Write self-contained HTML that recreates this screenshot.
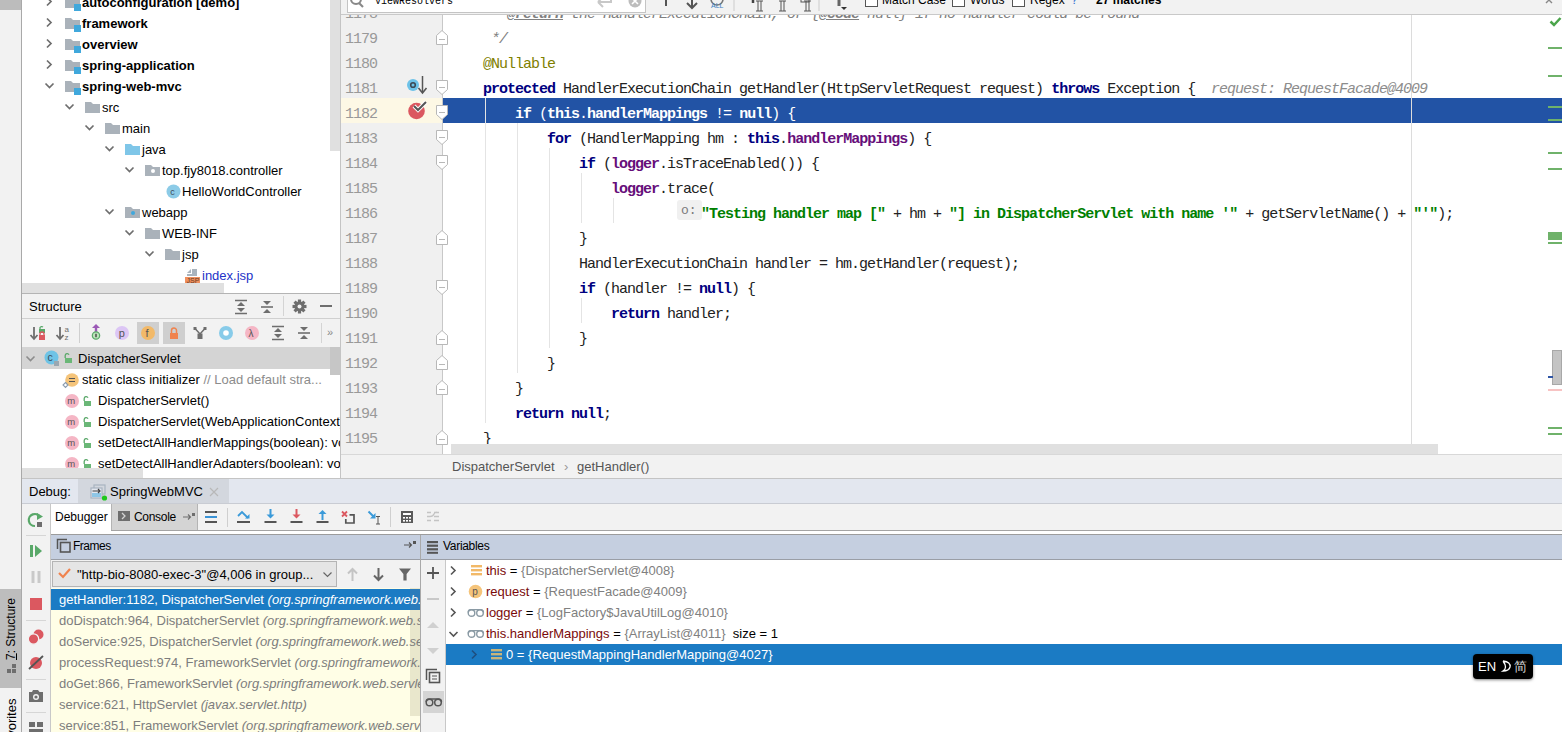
<!DOCTYPE html><html><head><meta charset="utf-8"><style>
*{box-sizing:border-box;margin:0;padding:0}
html,body{width:1562px;height:732px;overflow:hidden;background:#f2f2f2;font-family:"Liberation Sans",sans-serif;font-size:13px;color:#000}
.a{position:absolute}
.t{position:absolute;white-space:pre;line-height:21px}
.mono{font-family:"Liberation Mono",monospace}
.code{position:absolute;white-space:pre;font-family:"Liberation Mono",monospace;font-size:15px;letter-spacing:-1px;line-height:25px;color:#222}
.kw{color:#000080;font-weight:bold}
.fld{color:#660e7a;font-weight:bold}
.str{color:#008000;font-weight:bold}
.ln{position:absolute;white-space:pre;font-family:"Liberation Mono",monospace;font-size:15px;letter-spacing:-1px;line-height:25px;color:#999}
</style></head><body>
<div class="a" style="left:0;top:0;width:21px;height:732px;background:#f2f2f2"></div>
<div class="a" style="left:0;top:0;width:21px;height:10px;background:#bcbcbc"></div>
<div class="a" style="left:21px;top:0;width:1px;height:732px;background:#a9a9a9"></div>
<div class="a" style="left:0;top:589px;width:21px;height:99px;background:#bdbdbd"></div>
<div class="t" style="left:3px;top:660px;width:70px;transform-origin:0 0;transform:rotate(-90deg);font-size:12px;color:#000;line-height:17px"><span style="text-decoration:underline">7</span>: Structure</div>
<svg class="a" style="left:6px;top:663px" width="12" height="12"><rect x="1" y="6" width="4" height="4" fill="#6e6e6e"/><rect x="6" y="6" width="4" height="4" fill="#6e6e6e"/><rect x="6" y="1" width="4" height="4" fill="#6e6e6e"/></svg>
<div class="t" style="left:3px;top:752px;width:70px;transform-origin:0 0;transform:rotate(-90deg);font-size:13px;color:#000;line-height:17px">Favorites</div>
<div class="a" style="left:22px;top:0;width:318px;height:293px;background:#fff"></div>
<svg class="a" style="left:45px;top:-4px" width="12" height="12"><polyline points="2,1.5 6,5.5 2,9.5" fill="none" stroke="#6e6e6e" stroke-width="1.7"/></svg>
<svg class="a" style="left:65px;top:-4px" width="18" height="16"><path d="M0 1 H6 L8 3 H15 V12 H0 Z" fill="#aab2ba"/><rect x="9" y="8" width="7" height="7" fill="#40a8dc" stroke="#fff" stroke-width="0"/></svg>
<div class="t" style="left:82px;top:-8px;font-weight:bold;color:#000">autoconfiguration [demo]</div>
<svg class="a" style="left:45px;top:17px" width="12" height="12"><polyline points="2,1.5 6,5.5 2,9.5" fill="none" stroke="#6e6e6e" stroke-width="1.7"/></svg>
<svg class="a" style="left:65px;top:17px" width="18" height="16"><path d="M0 1 H6 L8 3 H15 V12 H0 Z" fill="#aab2ba"/><rect x="9" y="8" width="7" height="7" fill="#40a8dc" stroke="#fff" stroke-width="0"/></svg>
<div class="t" style="left:82px;top:13px;font-weight:bold;color:#000">framework</div>
<svg class="a" style="left:45px;top:38px" width="12" height="12"><polyline points="2,1.5 6,5.5 2,9.5" fill="none" stroke="#6e6e6e" stroke-width="1.7"/></svg>
<svg class="a" style="left:65px;top:38px" width="18" height="16"><path d="M0 1 H6 L8 3 H15 V12 H0 Z" fill="#aab2ba"/><rect x="9" y="8" width="7" height="7" fill="#40a8dc" stroke="#fff" stroke-width="0"/></svg>
<div class="t" style="left:82px;top:34px;font-weight:bold;color:#000">overview</div>
<svg class="a" style="left:45px;top:59px" width="12" height="12"><polyline points="2,1.5 6,5.5 2,9.5" fill="none" stroke="#6e6e6e" stroke-width="1.7"/></svg>
<svg class="a" style="left:65px;top:59px" width="18" height="16"><path d="M0 1 H6 L8 3 H15 V12 H0 Z" fill="#aab2ba"/><rect x="9" y="8" width="7" height="7" fill="#40a8dc" stroke="#fff" stroke-width="0"/></svg>
<div class="t" style="left:82px;top:55px;font-weight:bold;color:#000">spring-application</div>
<svg class="a" style="left:44px;top:80px" width="12" height="12"><polyline points="1.5,3.5 5.5,7.5 9.5,3.5" fill="none" stroke="#6e6e6e" stroke-width="1.7"/></svg>
<svg class="a" style="left:65px;top:80px" width="18" height="16"><path d="M0 1 H6 L8 3 H15 V12 H0 Z" fill="#aab2ba"/><rect x="9" y="8" width="7" height="7" fill="#40a8dc" stroke="#fff" stroke-width="0"/></svg>
<div class="t" style="left:82px;top:76px;font-weight:bold;color:#000">spring-web-mvc</div>
<svg class="a" style="left:64px;top:101px" width="12" height="12"><polyline points="1.5,3.5 5.5,7.5 9.5,3.5" fill="none" stroke="#6e6e6e" stroke-width="1.7"/></svg>
<svg class="a" style="left:85px;top:101px" width="18" height="16"><path d="M0 1 H6 L8 3 H15 V12 H0 Z" fill="#aab2ba"/></svg>
<div class="t" style="left:102px;top:97px;font-weight:normal;color:#000">src</div>
<svg class="a" style="left:84px;top:122px" width="12" height="12"><polyline points="1.5,3.5 5.5,7.5 9.5,3.5" fill="none" stroke="#6e6e6e" stroke-width="1.7"/></svg>
<svg class="a" style="left:105px;top:122px" width="18" height="16"><path d="M0 1 H6 L8 3 H15 V12 H0 Z" fill="#aab2ba"/></svg>
<div class="t" style="left:122px;top:118px;font-weight:normal;color:#000">main</div>
<svg class="a" style="left:104px;top:143px" width="12" height="12"><polyline points="1.5,3.5 5.5,7.5 9.5,3.5" fill="none" stroke="#6e6e6e" stroke-width="1.7"/></svg>
<svg class="a" style="left:125px;top:143px" width="18" height="16"><path d="M0 1 H6 L8 3 H15 V12 H0 Z" fill="#7fc6e8"/></svg>
<div class="t" style="left:142px;top:139px;font-weight:normal;color:#000">java</div>
<svg class="a" style="left:124px;top:164px" width="12" height="12"><polyline points="1.5,3.5 5.5,7.5 9.5,3.5" fill="none" stroke="#6e6e6e" stroke-width="1.7"/></svg>
<svg class="a" style="left:145px;top:164px" width="18" height="16"><path d="M0 1 H6 L8 3 H15 V12 H0 Z" fill="#aab2ba"/><rect x="6" y="5" width="4" height="4" rx="2" fill="#fff"/></svg>
<div class="t" style="left:162px;top:160px;font-weight:normal;color:#000">top.fjy8018.controller</div>
<svg class="a" style="left:166px;top:184px" width="16" height="16"><circle cx="7.5" cy="7.5" r="7" fill="#8ccbe7"/><text x="4.2" y="11" font-size="9" font-family="Liberation Sans" fill="#3d4a56">c</text></svg>
<div class="t" style="left:182px;top:181px;font-weight:normal;color:#000">HelloWorldController</div>
<svg class="a" style="left:104px;top:206px" width="12" height="12"><polyline points="1.5,3.5 5.5,7.5 9.5,3.5" fill="none" stroke="#6e6e6e" stroke-width="1.7"/></svg>
<svg class="a" style="left:125px;top:206px" width="18" height="16"><path d="M0 1 H6 L8 3 H15 V12 H0 Z" fill="#aab2ba"/><rect x="6" y="5" width="4" height="4" rx="2" fill="#40a8dc"/></svg>
<div class="t" style="left:142px;top:202px;font-weight:normal;color:#000">webapp</div>
<svg class="a" style="left:124px;top:227px" width="12" height="12"><polyline points="1.5,3.5 5.5,7.5 9.5,3.5" fill="none" stroke="#6e6e6e" stroke-width="1.7"/></svg>
<svg class="a" style="left:145px;top:227px" width="18" height="16"><path d="M0 1 H6 L8 3 H15 V12 H0 Z" fill="#aab2ba"/></svg>
<div class="t" style="left:162px;top:223px;font-weight:normal;color:#000">WEB-INF</div>
<svg class="a" style="left:144px;top:248px" width="12" height="12"><polyline points="1.5,3.5 5.5,7.5 9.5,3.5" fill="none" stroke="#6e6e6e" stroke-width="1.7"/></svg>
<svg class="a" style="left:165px;top:248px" width="18" height="16"><path d="M0 1 H6 L8 3 H15 V12 H0 Z" fill="#aab2ba"/></svg>
<div class="t" style="left:182px;top:244px;font-weight:normal;color:#000">jsp</div>
<svg class="a" style="left:185px;top:267px" width="18" height="20"><path d="M7 2 H12 V9 H2 V7 H7 Z" fill="#aab4bd"/><path d="M2 6 L6 2 V6 Z" fill="#aab4bd"/><rect x="0" y="10" width="15" height="7" fill="#f0905e"/><text x="1.5" y="16.3" font-size="7" font-family="Liberation Sans" fill="#6a3a20">JSP</text></svg>
<div class="t" style="left:202px;top:265px;font-weight:normal;color:#2233c8">index.jsp</div>
<div class="a" style="left:330px;top:0;width:10px;height:151px;background:#e0e0e0"></div>
<div class="a" style="left:22px;top:283px;width:318px;height:10px;background:#fff"></div>
<div class="a" style="left:22px;top:283px;width:202px;height:10px;background:#e0e0e0"></div>
<div class="a" style="left:22px;top:293px;width:318px;height:1px;background:#b4b4b4"></div>
<div class="a" style="left:22px;top:294px;width:318px;height:24px;background:#f2f2f2"></div>
<div class="a" style="left:22px;top:318px;width:318px;height:1px;background:#d0d0d0"></div>
<div class="a" style="left:22px;top:319px;width:318px;height:28px;background:#f2f2f2"></div>
<div class="a" style="left:22px;top:347px;width:318px;height:131px;background:#fff"></div>
<div class="a" style="left:22px;top:347px;width:318px;height:22px;background:#d4d4d4"></div>
<div class="t" style="left:29px;top:296px;color:#000">Structure</div>
<svg class="a" style="left:234px;top:299px" width="14" height="16"><path d="M1 1.5 H13 M1 14.5 H13" stroke="#6e6e6e" stroke-width="1.6"/><path d="M7 3 L11 7 H3 Z M7 13 L11 9 H3 Z" fill="#6e6e6e"/></svg>
<svg class="a" style="left:260px;top:299px" width="14" height="16"><path d="M1 8 H13" stroke="#6e6e6e" stroke-width="1.6"/><path d="M7 6 L11 2 H3 Z M7 10 L11 14 H3 Z" fill="#6e6e6e"/></svg>
<div class="a" style="left:283px;top:296px;width:1px;height:20px;background:#d4d4d4"></div>
<svg class="a" style="left:292px;top:299px" width="16" height="16"><g transform="translate(7.5,7.5)" fill="#6e6e6e"><circle r="5"/><rect x="-1.6" y="-7" width="3.2" height="4" transform="rotate(0)"/><rect x="-1.6" y="-7" width="3.2" height="4" transform="rotate(45)"/><rect x="-1.6" y="-7" width="3.2" height="4" transform="rotate(90)"/><rect x="-1.6" y="-7" width="3.2" height="4" transform="rotate(135)"/><rect x="-1.6" y="-7" width="3.2" height="4" transform="rotate(180)"/><rect x="-1.6" y="-7" width="3.2" height="4" transform="rotate(225)"/><rect x="-1.6" y="-7" width="3.2" height="4" transform="rotate(270)"/><rect x="-1.6" y="-7" width="3.2" height="4" transform="rotate(315)"/></g><circle cx="7.5" cy="7.5" r="2" fill="#f2f2f2"/></svg>
<div class="a" style="left:320px;top:305px;width:12px;height:2px;background:#6e6e6e"></div>
<div class="a" style="left:137px;top:322px;width:22px;height:22px;background:#cfcfcf"></div>
<div class="a" style="left:163px;top:322px;width:22px;height:22px;background:#cfcfcf"></div>
<svg class="a" style="left:29px;top:324px" width="18" height="18"><path d="M5 3 V15 M1.5 11 L5 15 L8.5 11" fill="none" stroke="#6e6e6e" stroke-width="1.8"/><path d="M11 6 V3.5 A2 2 0 0 1 14 3" fill="none" stroke="#59a869" stroke-width="1.3"/><rect x="10" y="5" width="6" height="4" fill="#59a869"/><path d="M11 11 V10 A2 2 0 0 1 15 10 V11" fill="none" stroke="#db5860" stroke-width="1.3"/><rect x="10" y="11" width="6" height="5" fill="#db5860"/></svg>
<svg class="a" style="left:55px;top:324px" width="18" height="18"><path d="M5 3 V15 M1.5 11 L5 15 L8.5 11" fill="none" stroke="#6e6e6e" stroke-width="1.8"/><text x="9.5" y="8" font-size="8" font-family="Liberation Sans" fill="#6e6e6e">a</text><text x="9.5" y="16" font-size="8" font-family="Liberation Sans" fill="#6e6e6e">z</text></svg>
<div class="a" style="left:79px;top:323px;width:1px;height:20px;background:#cfcfcf"></div>
<svg class="a" style="left:88px;top:323px" width="16" height="18"><path d="M8 1 L12 5 H9.2 V9 H6.8 V5 H4 Z" fill="#9b59b6"/><circle cx="8" cy="12.5" r="3.7" fill="#b9e4b9" stroke="#59a869" stroke-width="1.2"/><rect x="7.2" y="10.8" width="1.6" height="3.4" fill="#555"/></svg>
<svg class="a" style="left:114px;top:325px" width="16" height="16"><circle cx="8" cy="8" r="7" fill="#dcc6f5"/><text x="4.8" y="12" font-size="11" font-family="Liberation Sans" fill="#555">p</text></svg>
<svg class="a" style="left:140px;top:325px" width="16" height="16"><circle cx="8" cy="8" r="7" fill="#f2b968"/><text x="5.5" y="12" font-size="11" font-family="Liberation Sans" fill="#555">f</text></svg>
<svg class="a" style="left:166px;top:325px" width="16" height="16"><path d="M5.5 8 V5.5 A2.5 2.5 0 0 1 10.5 5.5 V8" fill="none" stroke="#f0834e" stroke-width="1.5"/><rect x="4" y="8" width="8" height="6" fill="#f0834e"/></svg>
<svg class="a" style="left:192px;top:325px" width="16" height="16"><rect x="1.5" y="2" width="3" height="3" fill="#6e6e6e"/><rect x="11.5" y="2" width="3" height="3" fill="#6e6e6e"/><path d="M3 3.5 L8 9 L13 3.5" fill="none" stroke="#6e6e6e" stroke-width="1.5"/><rect x="5.5" y="8.5" width="5" height="5.5" fill="#6e6e6e"/></svg>
<svg class="a" style="left:218px;top:325px" width="16" height="16"><circle cx="8" cy="8" r="7" fill="#87cbe9"/><circle cx="8" cy="8" r="2.8" fill="#fff"/></svg>
<svg class="a" style="left:244px;top:325px" width="16" height="16"><circle cx="8" cy="8" r="7" fill="#f5b6c5"/><text x="4.6" y="12" font-size="10" font-family="Liberation Sans" fill="#555">λ</text></svg>
<svg class="a" style="left:271px;top:325px" width="14" height="16"><path d="M1 1.5 H13 M1 14.5 H13" stroke="#6e6e6e" stroke-width="1.6"/><path d="M7 3 L11 7 H3 Z M7 13 L11 9 H3 Z" fill="#6e6e6e"/></svg>
<svg class="a" style="left:297px;top:325px" width="14" height="16"><path d="M1 8 H13" stroke="#6e6e6e" stroke-width="1.6"/><path d="M7 6 L11 2 H3 Z M7 10 L11 14 H3 Z" fill="#6e6e6e"/></svg>
<div class="a" style="left:321px;top:323px;width:1px;height:20px;background:#d4d4d4"></div>
<div class="t" style="left:327px;top:322px;font-size:11px;color:#888">»</div>
<svg class="a" style="left:25px;top:354px" width="12" height="10"><polyline points="1.5,2.5 5.5,6.5 9.5,2.5" fill="none" stroke="#8c8c8c" stroke-width="1.6"/></svg>
<svg class="a" style="left:44px;top:350px" width="18" height="18"><circle cx="7.5" cy="7.5" r="7" fill="#6ec3e6"/><text x="3.6" y="11" font-size="10.5" font-family="Liberation Sans" fill="#3d4a56">c</text><rect x="10" y="11" width="5" height="5" fill="#9aa7b0"/></svg>
<svg class="a" style="left:63px;top:352px" width="10" height="12"><path d="M2.2 6 V3.6 A2 2 0 0 1 6 2.8" fill="none" stroke="#59a869" stroke-width="1.3"/><rect x="2" y="6" width="7" height="5" fill="#6ab777"/></svg>
<div class="t" style="left:78px;top:348px;color:#000">DispatcherServlet</div>
<svg class="a" style="left:62px;top:372px" width="18" height="18"><circle cx="10" cy="8" r="6.8" fill="#f5c47a"/><path d="M7 6.5 H13 M7 9.5 H13" stroke="#555" stroke-width="1.2"/><path d="M3.5 10.5 L6 13 L3.5 15.5 L1 13 Z" fill="none" stroke="#8a9cb0" stroke-width="1.1"/></svg>
<div class="t" style="left:82px;top:369px;color:#000">static class initializer <span style="color:#8c8c8c">// Load default stra...</span></div>
<svg class="a" style="left:64px;top:393px" width="16" height="16"><circle cx="8" cy="8" r="7" fill="#f5b6c5"/><text x="3.2" y="10.8" font-size="9.5" font-family="Liberation Sans" fill="#555">m</text></svg>
<svg class="a" style="left:82px;top:395px" width="10" height="12"><path d="M2.2 6 V3.6 A2 2 0 0 1 6 2.8" fill="none" stroke="#59a869" stroke-width="1.3"/><rect x="2" y="6" width="7" height="5" fill="#6ab777"/></svg>
<div class="t" style="left:98px;top:390px;color:#000;width:242px;overflow:hidden">DispatcherServlet()</div>
<svg class="a" style="left:64px;top:414px" width="16" height="16"><circle cx="8" cy="8" r="7" fill="#f5b6c5"/><text x="3.2" y="10.8" font-size="9.5" font-family="Liberation Sans" fill="#555">m</text></svg>
<svg class="a" style="left:82px;top:416px" width="10" height="12"><path d="M2.2 6 V3.6 A2 2 0 0 1 6 2.8" fill="none" stroke="#59a869" stroke-width="1.3"/><rect x="2" y="6" width="7" height="5" fill="#6ab777"/></svg>
<div class="t" style="left:98px;top:411px;color:#000;width:242px;overflow:hidden">DispatcherServlet(WebApplicationContext)</div>
<svg class="a" style="left:64px;top:435px" width="16" height="16"><circle cx="8" cy="8" r="7" fill="#f5b6c5"/><text x="3.2" y="10.8" font-size="9.5" font-family="Liberation Sans" fill="#555">m</text></svg>
<svg class="a" style="left:82px;top:437px" width="10" height="12"><path d="M2.2 6 V3.6 A2 2 0 0 1 6 2.8" fill="none" stroke="#59a869" stroke-width="1.3"/><rect x="2" y="6" width="7" height="5" fill="#6ab777"/></svg>
<div class="t" style="left:98px;top:432px;color:#000;width:242px;overflow:hidden">setDetectAllHandlerMappings(boolean): void</div>
<svg class="a" style="left:64px;top:456px" width="16" height="16"><circle cx="8" cy="8" r="7" fill="#f5b6c5"/><text x="3.2" y="10.8" font-size="9.5" font-family="Liberation Sans" fill="#555">m</text></svg>
<svg class="a" style="left:82px;top:458px" width="10" height="12"><path d="M2.2 6 V3.6 A2 2 0 0 1 6 2.8" fill="none" stroke="#59a869" stroke-width="1.3"/><rect x="2" y="6" width="7" height="5" fill="#6ab777"/></svg>
<div class="t" style="left:98px;top:453px;color:#000;width:242px;overflow:hidden">setDetectAllHandlerAdapters(boolean): void</div>
<div class="a" style="left:330px;top:347px;width:10px;height:28px;background:#c6c6c6"></div>
<div class="a" style="left:22px;top:468px;width:318px;height:10px;background:#fff"></div>
<div class="a" style="left:22px;top:468px;width:121px;height:10px;background:#e0e0e0"></div>
<div class="a" style="left:340px;top:0;width:1px;height:479px;background:#c4c4c4"></div>
<div class="a" style="left:341px;top:0;width:1221px;height:14px;background:#f2f2f2"></div>
<div class="a" style="left:341px;top:14px;width:102px;height:441px;background:#f0f0f0"></div>
<div class="a" style="left:443px;top:14px;width:1119px;height:441px;background:#fff"></div>
<div class="a" style="left:341px;top:98px;width:102px;height:25px;background:#fdf8e5"></div>
<div class="a" style="left:443px;top:98px;width:1119px;height:25px;background:#2253a5"></div>
<div class="a" style="left:485px;top:98px;width:1px;height:325px;background:#e4e4e4"></div>
<div class="a" style="left:517px;top:123px;width:1px;height:250px;background:#e4e4e4"></div>
<div class="a" style="left:549px;top:148px;width:1px;height:200px;background:#e4e4e4"></div>
<div class="a" style="left:581px;top:173px;width:1px;height:50px;background:#e4e4e4"></div>
<div class="a" style="left:613px;top:198px;width:1px;height:25px;background:#e4e4e4"></div>
<div class="a" style="left:581px;top:298px;width:1px;height:25px;background:#e4e4e4"></div>
<div class="a" style="left:1411px;top:14px;width:1px;height:441px;background:#dcdcdc"></div>
<div class="code" style="left:451px;top:2px"><span style="color:#808080;font-style:italic">     * <b style="text-decoration:underline">@return</b> the HandlerExecutionChain, or {<b style="text-decoration:underline">@code</b> null} if no handler could be found</span></div>
<div class="ln" style="left:345px;top:2px">1178</div>
<div class="code" style="left:451px;top:27px"><span style="color:#808080;font-style:italic">     */</span></div>
<div class="ln" style="left:345px;top:27px">1179</div>
<div class="code" style="left:451px;top:52px"><span style="color:#808000">    @Nullable</span></div>
<div class="ln" style="left:345px;top:52px">1180</div>
<div class="code" style="left:451px;top:77px">    <span class="kw">protected</span> HandlerExecutionChain getHandler(HttpServletRequest request) <span class="kw">throws</span> Exception {</div>
<div class="ln" style="left:345px;top:77px">1181</div>
<div class="code" style="left:451px;top:102px"><span style="color:#fff">        <b>if</b> (<b>this</b>.<b>handlerMappings</b> != <b>null</b>) {</span></div>
<div class="ln" style="left:345px;top:102px">1182</div>
<div class="code" style="left:451px;top:127px">            <span class="kw">for</span> (HandlerMapping hm : <span class="kw">this</span>.<span class="fld">handlerMappings</span>) {</div>
<div class="ln" style="left:345px;top:127px">1183</div>
<div class="code" style="left:451px;top:152px">                <span class="kw">if</span> (<span class="fld">logger</span>.isTraceEnabled()) {</div>
<div class="ln" style="left:345px;top:152px">1184</div>
<div class="code" style="left:451px;top:177px">                    <span class="fld">logger</span>.trace(</div>
<div class="ln" style="left:345px;top:177px">1185</div>
<div class="code" style="left:451px;top:202px">                            <span style="display:inline-block;width:26px;height:20px;vertical-align:top;margin-top:2px"></span><span class="str">&quot;Testing handler map [&quot;</span> + hm + <span class="str">&quot;] in DispatcherServlet with name &#x27;&quot;</span> + getServletName() + <span class="str">&quot;&#x27;&quot;</span>);</div>
<div class="ln" style="left:345px;top:202px">1186</div>
<div class="code" style="left:451px;top:227px">                }</div>
<div class="ln" style="left:345px;top:227px">1187</div>
<div class="code" style="left:451px;top:252px">                HandlerExecutionChain handler = hm.getHandler(request);</div>
<div class="ln" style="left:345px;top:252px">1188</div>
<div class="code" style="left:451px;top:277px">                <span class="kw">if</span> (handler != <span class="kw">null</span>) {</div>
<div class="ln" style="left:345px;top:277px">1189</div>
<div class="code" style="left:451px;top:302px">                    <span class="kw">return</span> handler;</div>
<div class="ln" style="left:345px;top:302px">1190</div>
<div class="code" style="left:451px;top:327px">                }</div>
<div class="ln" style="left:345px;top:327px">1191</div>
<div class="code" style="left:451px;top:352px">            }</div>
<div class="ln" style="left:345px;top:352px">1192</div>
<div class="code" style="left:451px;top:377px">        }</div>
<div class="ln" style="left:345px;top:377px">1193</div>
<div class="code" style="left:451px;top:402px">        <span class="kw">return</span> <span class="kw">null</span>;</div>
<div class="ln" style="left:345px;top:402px">1194</div>
<div class="code" style="left:451px;top:427px">    }</div>
<div class="ln" style="left:345px;top:427px">1195</div>
<div class="code" style="left:1211px;top:77px;color:#8c8c8c;font-style:italic">request: RequestFacade@4009</div>
<div class="a" style="left:677px;top:200px;width:25px;height:20px;background:#f0f0f0;border-radius:3px"></div>
<div class="a" style="left:681px;top:200px;font-size:13px;line-height:22px;color:#7a7a7a;font-family:Liberation Mono">o:</div>
<div class="a" style="left:442px;top:14px;width:1px;height:441px;background:#c8c8c8"></div>
<svg class="a" style="left:436px;top:30px" width="13" height="16"><polygon points="6,0.5 11.5,5.5 11.5,14.5 0.5,14.5 0.5,5.5" fill="#fff" stroke="#b8b8b8"/><line x1="3" x2="9" y1="9.5" y2="9.5" stroke="#b8b8b8"/></svg>
<svg class="a" style="left:436px;top:80px" width="13" height="16"><polygon points="0.5,0.5 11.5,0.5 11.5,9.5 6,14.5 0.5,9.5" fill="#fff" stroke="#b8b8b8"/><line x1="3" x2="9" y1="7.5" y2="7.5" stroke="#b8b8b8"/></svg>
<svg class="a" style="left:436px;top:105px" width="13" height="16"><polygon points="0.5,0.5 11.5,0.5 11.5,9.5 6,14.5 0.5,9.5" fill="#fff" stroke="#b8b8b8"/><line x1="3" x2="9" y1="7.5" y2="7.5" stroke="#b8b8b8"/></svg>
<svg class="a" style="left:436px;top:130px" width="13" height="16"><polygon points="0.5,0.5 11.5,0.5 11.5,9.5 6,14.5 0.5,9.5" fill="#fff" stroke="#b8b8b8"/><line x1="3" x2="9" y1="7.5" y2="7.5" stroke="#b8b8b8"/></svg>
<svg class="a" style="left:436px;top:155px" width="13" height="16"><polygon points="0.5,0.5 11.5,0.5 11.5,9.5 6,14.5 0.5,9.5" fill="#fff" stroke="#b8b8b8"/><line x1="3" x2="9" y1="7.5" y2="7.5" stroke="#b8b8b8"/></svg>
<svg class="a" style="left:436px;top:230px" width="13" height="16"><polygon points="6,0.5 11.5,5.5 11.5,14.5 0.5,14.5 0.5,5.5" fill="#fff" stroke="#b8b8b8"/><line x1="3" x2="9" y1="9.5" y2="9.5" stroke="#b8b8b8"/></svg>
<svg class="a" style="left:436px;top:280px" width="13" height="16"><polygon points="0.5,0.5 11.5,0.5 11.5,9.5 6,14.5 0.5,9.5" fill="#fff" stroke="#b8b8b8"/><line x1="3" x2="9" y1="7.5" y2="7.5" stroke="#b8b8b8"/></svg>
<svg class="a" style="left:436px;top:330px" width="13" height="16"><polygon points="6,0.5 11.5,5.5 11.5,14.5 0.5,14.5 0.5,5.5" fill="#fff" stroke="#b8b8b8"/><line x1="3" x2="9" y1="9.5" y2="9.5" stroke="#b8b8b8"/></svg>
<svg class="a" style="left:436px;top:355px" width="13" height="16"><polygon points="6,0.5 11.5,5.5 11.5,14.5 0.5,14.5 0.5,5.5" fill="#fff" stroke="#b8b8b8"/><line x1="3" x2="9" y1="9.5" y2="9.5" stroke="#b8b8b8"/></svg>
<svg class="a" style="left:436px;top:380px" width="13" height="16"><polygon points="6,0.5 11.5,5.5 11.5,14.5 0.5,14.5 0.5,5.5" fill="#fff" stroke="#b8b8b8"/><line x1="3" x2="9" y1="9.5" y2="9.5" stroke="#b8b8b8"/></svg>
<svg class="a" style="left:436px;top:430px" width="13" height="16"><polygon points="6,0.5 11.5,5.5 11.5,14.5 0.5,14.5 0.5,5.5" fill="#fff" stroke="#b8b8b8"/><line x1="3" x2="9" y1="9.5" y2="9.5" stroke="#b8b8b8"/></svg>
<svg class="a" style="left:405px;top:74px" width="24" height="22"><circle cx="8" cy="11" r="6" fill="#6dc2e8"/><circle cx="8" cy="11" r="2.3" fill="none" stroke="#3d4a56" stroke-width="1.6"/><line x1="17.5" y1="2" x2="17.5" y2="18" stroke="#555" stroke-width="1.5"/><polyline points="13.5,14 17.5,19 21.5,14" fill="none" stroke="#555" stroke-width="1.6"/></svg>
<svg class="a" style="left:405px;top:99px" width="24" height="22"><circle cx="11.5" cy="12" r="8.3" fill="#db5860"/><polyline points="9,7 13,11 21,3" fill="none" stroke="#fff" stroke-width="4"/><polyline points="9,7 13,11 21,3" fill="none" stroke="#555" stroke-width="2"/></svg>
<div class="a" style="left:451px;top:444px;width:987px;height:10px;background:#e0e0e0"></div>
<div class="a" style="left:1548px;top:47px;width:14px;height:2px;background:#6fb26a"></div>
<div class="a" style="left:1548px;top:75px;width:14px;height:2px;background:#6fb26a"></div>
<div class="a" style="left:1548px;top:106px;width:14px;height:2px;background:#6fb26a"></div>
<div class="a" style="left:1548px;top:119px;width:14px;height:2px;background:#6fb26a"></div>
<div class="a" style="left:1548px;top:152px;width:14px;height:2px;background:#6fb26a"></div>
<div class="a" style="left:1548px;top:168px;width:14px;height:2px;background:#6fb26a"></div>
<div class="a" style="left:1548px;top:232px;width:14px;height:8px;background:#6fb26a"></div>
<div class="a" style="left:1548px;top:242px;width:14px;height:2px;background:#6fb26a"></div>
<div class="a" style="left:1548px;top:427px;width:14px;height:2px;background:#6fb26a"></div>
<div class="a" style="left:1548px;top:433px;width:14px;height:2px;background:#6fb26a"></div>
<svg class="a" style="left:1549px;top:16px" width="13" height="11"><polyline points="1.5,5.5 5,9 11.5,2" fill="none" stroke="#4ba54b" stroke-width="2.5"/></svg>
<div class="a" style="left:1552px;top:350px;width:10px;height:35px;background:#c4c4c4;border:1px solid #a8a8a8"></div>
<div class="a" style="left:1548px;top:376px;width:5px;height:2px;background:#2f55a5"></div>
<div class="a" style="left:1548px;top:389px;width:14px;height:2px;background:#f7c3c3"></div>
<div class="a" style="left:341px;top:0;width:1221px;height:14px;background:#f2f2f2"></div>
<div class="a" style="left:341px;top:14px;width:1221px;height:1px;background:#c9c9c9"></div>
<div class="a" style="left:347px;top:-8px;width:299px;height:21px;background:#fff;border:1px solid #c4c4c4"></div>
<svg class="a" style="left:350px;top:0" width="20" height="10"><circle cx="6" cy="-1" r="5" fill="none" stroke="#888" stroke-width="2"/><line x1="9" y1="3" x2="13" y2="7" stroke="#888" stroke-width="2.2"/></svg>
<svg class="a" style="left:370px;top:0" width="100" height="12"><text x="5" y="3.7" font-family="Liberation Mono" font-size="10" fill="#000">ViewResolvers</text></svg>
<svg class="a" style="left:595px;top:0" width="50" height="12"><path d="M3 2 L 16 2 L 16 -5" fill="none" stroke="#c8c8c8" stroke-width="2"/><path d="M3 2 L8 -3 M3 2 L8 7" stroke="#c8c8c8" stroke-width="2"/><circle cx="40" cy="1" r="6.5" fill="#bdbdbd"/><path d="M37 -2 L43 4 M43 -2 L37 4" stroke="#fff" stroke-width="1.6"/></svg>
<svg class="a" style="left:655px;top:0" width="200" height="14"><path d="M11 0 V6" stroke="#555" stroke-width="2"/><path d="M37 -4 V7 M32 3 L37 8 L42 3" fill="none" stroke="#555" stroke-width="2"/><circle cx="62" cy="-1" r="6" fill="none" stroke="#777" stroke-width="1.6"/><text x="56" y="8" font-size="7" font-family="Liberation Sans" fill="#3a7ec0">ALL</text><line x1="79" y1="0" x2="79" y2="11" stroke="#ccc"/><path d="M98 0 V3" stroke="#444" stroke-width="2.5"/><path d="M101 1 H108 M101 11 H108 M103 1 V11 M106 1 V11" stroke="#555"/><path d="M124 1 H131 M124 11 H131 M126 1 V11 M129 1 V11" stroke="#555"/><rect x="146" y="-3" width="8" height="5" fill="none" stroke="#555"/><path d="M149 1 H156 M149 11 H156 M151 1 V11 M154 1 V11" stroke="#555"/><line x1="164" y1="0" x2="164" y2="11" stroke="#ccc"/><path d="M184 0 V6" stroke="#666" stroke-width="3"/><path d="M186 7 H192 L189 10 Z" fill="#333"/></svg>
<div class="a" style="left:865px;top:-6px;width:13px;height:13px;border:1px solid #555;background:#fff"></div>
<div class="a" style="left:952px;top:-6px;width:13px;height:13px;border:1px solid #555;background:#fff"></div>
<div class="a" style="left:1012px;top:-6px;width:13px;height:13px;border:1px solid #555;background:#fff"></div>
<div class="t" style="left:882px;top:-10px;font-size:12px;color:#000">Match Case</div>
<div class="t" style="left:970px;top:-10px;font-size:12px;color:#000">Words</div>
<div class="t" style="left:1030px;top:-10px;font-size:12px;color:#000">Regex</div>
<div class="t" style="left:1071px;top:-10px;font-size:12px;color:#3070d0">?</div>
<div class="t" style="left:1096px;top:-10px;font-size:12px;font-weight:bold;color:#000">27 matches</div>
<svg class="a" style="left:1544px;top:0" width="14" height="8"><path d="M2 -3 L8 3 M8 -3 L2 3" stroke="#888" stroke-width="1.4"/></svg>
<div class="a" style="left:341px;top:454px;width:1221px;height:1px;background:#d8d8d8"></div>
<div class="a" style="left:341px;top:455px;width:1221px;height:23px;background:#f2f2f2"></div>
<div class="a" style="left:22px;top:478px;width:1540px;height:1px;background:#c4c4c4"></div>
<div class="t" style="left:452px;top:456px;color:#555">DispatcherServlet</div>
<div class="t" style="left:564px;top:456px;color:#999">›</div>
<div class="t" style="left:577px;top:456px;color:#555">getHandler()</div>
<div class="a" style="left:22px;top:479px;width:1540px;height:24px;background:#e3e7ef"></div>
<div class="a" style="left:78px;top:479px;width:151px;height:24px;background:#d3d7de"></div>
<div class="t" style="left:29px;top:481px;color:#000">Debug:</div>
<svg class="a" style="left:90px;top:484px" width="18" height="17"><rect x="4" y="1" width="11" height="9" fill="none" stroke="#a8b4c0" stroke-width="1.2"/><rect x="1" y="4" width="11" height="10" fill="#e3e7ef" stroke="#a8b4c0" stroke-width="1.2"/><rect x="2" y="9" width="9" height="4" fill="#8ec6e6"/><path d="M2.5 7 H10 M8 5 L10 7 L8 9" fill="none" stroke="#444" stroke-width="1.2"/><circle cx="14.5" cy="14" r="2.6" fill="#1ec81e"/></svg>
<div class="t" style="left:110px;top:481px;color:#000">SpringWebMVC</div>
<svg class="a" style="left:208px;top:486px" width="12" height="12"><path d="M2 2 L10 10 M10 2 L2 10" stroke="#b8b8b8" stroke-width="1.2"/></svg>
<div class="a" style="left:22px;top:503px;width:1540px;height:1px;background:#c9ccd3"></div>
<div class="a" style="left:22px;top:504px;width:1540px;height:228px;background:#f2f2f2"></div>
<div class="a" style="left:50px;top:504px;width:1px;height:228px;background:#c8c8c8"></div>
<svg class="a" style="left:27px;top:511px" width="18" height="18"><path d="M13 6 A6 6 0 1 0 8 15" fill="none" stroke="#59a869" stroke-width="2.2"/><path d="M10 2 L16 5.5 L10 9 Z" fill="#59a869"/><rect x="10" y="11" width="5" height="5" fill="#6e6e6e"/></svg>
<div class="a" style="left:26px;top:535px;width:20px;height:1px;background:#d6d6d6"></div>
<div class="a" style="left:26px;top:620px;width:20px;height:1px;background:#d6d6d6"></div>
<div class="a" style="left:26px;top:679px;width:20px;height:1px;background:#d6d6d6"></div>
<div class="a" style="left:26px;top:712px;width:20px;height:1px;background:#d6d6d6"></div>
<svg class="a" style="left:28px;top:543px" width="16" height="16"><rect x="2" y="2" width="3" height="12" fill="#59a869"/><path d="M7 2 L14 8 L7 14 Z" fill="#59a869"/></svg>
<svg class="a" style="left:28px;top:569px" width="16" height="16"><rect x="3.5" y="2" width="3" height="12" fill="#c9c9c9"/><rect x="9.5" y="2" width="3" height="12" fill="#c9c9c9"/></svg>
<svg class="a" style="left:28px;top:596px" width="16" height="16"><rect x="2" y="2" width="12" height="12" fill="#db5860"/></svg>
<svg class="a" style="left:27px;top:628px" width="18" height="18"><circle cx="11.5" cy="6.5" r="5" fill="#db5860"/><circle cx="6.5" cy="11" r="5.2" fill="#db5860" stroke="#f2f2f2" stroke-width="1.3"/></svg>
<svg class="a" style="left:27px;top:654px" width="18" height="18"><circle cx="9" cy="9" r="6" fill="#db5860"/><path d="M2 15 L16 2" stroke="#555" stroke-width="1.8"/></svg>
<svg class="a" style="left:27px;top:688px" width="18" height="16"><path d="M6 2 H11 L12.5 4 H16 V14 H2 V4 H5 Z" fill="#6e6e6e"/><circle cx="9" cy="9" r="3" fill="#f2f2f2"/><circle cx="9" cy="9" r="1.6" fill="#6e6e6e"/></svg>
<svg class="a" style="left:27px;top:720px" width="18" height="14"><rect x="2" y="2" width="6" height="5" fill="#6e6e6e"/><rect x="10" y="2" width="6" height="5" fill="#6e6e6e"/><rect x="2" y="9" width="14" height="5" fill="#6e6e6e"/></svg>
<div class="a" style="left:51px;top:504px;width:60px;height:27px;background:#fff"></div>
<div class="t" style="left:55px;top:507px;color:#000;font-size:12px">Debugger</div>
<div class="a" style="left:111px;top:504px;width:87px;height:27px;background:#d4d4d4;border:1px solid #b4b4b4;border-top:0"></div>
<svg class="a" style="left:118px;top:511px" width="14" height="12"><rect x="0" y="0" width="12" height="10" fill="#6e6e6e"/><path d="M4 2 L7 5 L4 8" fill="none" stroke="#d4d4d4" stroke-width="1.3"/></svg>
<div class="t" style="left:134px;top:507px;color:#000;font-size:12px;letter-spacing:-0.3px">Console</div>
<svg class="a" style="left:182px;top:511px" width="14" height="12"><path d="M1 6 H8 M6 3.5 L8.5 6 L6 8.5" fill="none" stroke="#6e6e6e" stroke-width="1.1"/><rect x="10" y="2" width="3" height="3" fill="#6e6e6e"/></svg>
<svg class="a" style="left:204px;top:510px" width="14" height="14"><rect x="1" y="1" width="12" height="2" fill="#555"/><rect x="1" y="6" width="12" height="2" fill="#3a93d6"/><rect x="1" y="11" width="12" height="2" fill="#555"/></svg>
<div class="a" style="left:227px;top:508px;width:1px;height:19px;background:#cfcfcf"></div>
<svg class="a" style="left:236px;top:508px" width="16" height="17"><path d="M2 8 L6 4 L12 10" fill="none" stroke="#3a9ad9" stroke-width="1.8"/><path d="M9 10.5 H13.5 V6 Z" fill="#3a9ad9"/><rect x="1" y="13" width="13" height="2" fill="#555"/></svg>
<svg class="a" style="left:263px;top:508px" width="16" height="17"><path d="M7.5 1 V8" stroke="#3a9ad9" stroke-width="2"/><path d="M3.5 6.5 H11.5 L7.5 10.5 Z" fill="#3a9ad9"/><rect x="1.5" y="13" width="12" height="2" fill="#555"/></svg>
<svg class="a" style="left:289px;top:508px" width="16" height="17"><path d="M7.5 1 V8" stroke="#db5860" stroke-width="2"/><path d="M3.5 6.5 H11.5 L7.5 10.5 Z" fill="#db5860"/><rect x="1.5" y="13" width="12" height="2" fill="#555"/></svg>
<svg class="a" style="left:315px;top:508px" width="16" height="17"><path d="M7.5 5 V12" stroke="#3a9ad9" stroke-width="2"/><path d="M3.5 6 H11.5 L7.5 2 Z" fill="#3a9ad9"/><rect x="1.5" y="13" width="12" height="2" fill="#555"/></svg>
<svg class="a" style="left:340px;top:509px" width="16" height="16"><path d="M2 2.5 L7 7.5 M7 2.5 L2 7.5" stroke="#db5860" stroke-width="1.8"/><path d="M9.5 5.8 H14 V14 H5.8 V10" fill="none" stroke="#555" stroke-width="1.7"/></svg>
<svg class="a" style="left:366px;top:509px" width="18" height="17"><path d="M2.5 2.5 L8 8" stroke="#3a9ad9" stroke-width="2"/><path d="M9.5 9.5 H4 L9.5 4 Z" fill="#3a9ad9"/><path d="M10 7.5 H14 M10 15 H14 M12 7.5 V15" stroke="#555" stroke-width="1"/></svg>
<div class="a" style="left:390px;top:507px;width:1px;height:20px;background:#cfcfcf"></div>
<svg class="a" style="left:401px;top:511px" width="13" height="13"><rect x="0" y="0" width="12" height="12" fill="#5a5a5a"/><rect x="2" y="2" width="8" height="2" fill="#fff"/><g fill="#fff"><rect x="2" y="6" width="2" height="1.6"/><rect x="5" y="6" width="2" height="1.6"/><rect x="8" y="6" width="2" height="1.6"/><rect x="2" y="9" width="2" height="1.6"/><rect x="5" y="9" width="2" height="1.6"/><rect x="8" y="9" width="2" height="1.6"/></g></svg>
<svg class="a" style="left:427px;top:511px" width="13" height="13"><g stroke="#c4c4c4" stroke-width="1.3" fill="none"><path d="M0 1.5 H4 M0 5.5 H4 M0 9.5 H4 M3 5.5 Q6 5.5 7 3 T11 1.5 M7 1.5 H12 M7 5.5 H12 M7 9.5 H12"/></g></svg>
<div class="a" style="left:51px;top:530px;width:1511px;height:1px;background:#a4a4a4"></div>
<div class="a" style="left:51px;top:530px;width:60px;height:1px;background:#fff"></div>
<div class="a" style="left:51px;top:531px;width:1511px;height:3px;background:#fff"></div>
<div class="a" style="left:51px;top:534px;width:1511px;height:1px;background:#9c9c9c"></div>
<div class="a" style="left:51px;top:535px;width:1511px;height:24px;background:#c5cfe0"></div>
<div class="a" style="left:51px;top:559px;width:1511px;height:1px;background:#9a9ea6"></div>
<svg class="a" style="left:56px;top:538px" width="16" height="16"><path d="M1.5 11 V1.5 H11" fill="none" stroke="#555" stroke-width="1.5"/><rect x="4.5" y="4.5" width="9.5" height="9.5" fill="none" stroke="#555" stroke-width="1.6"/></svg>
<div class="t" style="left:73px;top:536px;color:#000;font-size:12px;letter-spacing:-0.5px">Frames</div>
<svg class="a" style="left:403px;top:539px" width="14" height="12"><path d="M1 6 H8 M6 3.5 L8.5 6 L6 8.5" fill="none" stroke="#555" stroke-width="1.1"/><rect x="10" y="2" width="3" height="3" fill="#555"/></svg>
<div class="a" style="left:420px;top:535px;width:1px;height:197px;background:#a9a9a9"></div>
<svg class="a" style="left:426px;top:540px" width="14" height="14"><rect x="1" y="1" width="11" height="2.2" fill="#555"/><rect x="1" y="4.6" width="11" height="2.2" fill="#555"/><rect x="1" y="8.2" width="11" height="2.2" fill="#555"/><rect x="1" y="11.8" width="11" height="2" fill="#555"/></svg>
<div class="t" style="left:443px;top:536px;color:#000;font-size:12px;letter-spacing:-0.3px">Variables</div>
<div class="a" style="left:51px;top:560px;width:369px;height:28px;background:#f2f2f2"></div>
<div class="a" style="left:52px;top:561px;width:285px;height:26px;background:#e5e5e5;border:1px solid #b4b4b4"></div>
<svg class="a" style="left:57px;top:566px" width="16" height="14"><path d="M2 7 L6 11 L13 3" fill="none" stroke="#f0834e" stroke-width="2.2"/></svg>
<div class="t" style="left:77px;top:564px;color:#000">"http-bio-8080-exec-3"@4,006 in group...</div>
<svg class="a" style="left:322px;top:570px" width="12" height="10"><polyline points="1.5,2.5 5.5,6.5 9.5,2.5" fill="none" stroke="#666" stroke-width="1.2"/></svg>
<svg class="a" style="left:345px;top:567px" width="16" height="16"><path d="M7.5 2 V14 M3 6.5 L7.5 2 L12 6.5" fill="none" stroke="#c4c4c4" stroke-width="2"/></svg>
<svg class="a" style="left:371px;top:567px" width="16" height="16"><path d="M7.5 1 V13 M3 8.5 L7.5 13 L12 8.5" fill="none" stroke="#666" stroke-width="2"/></svg>
<svg class="a" style="left:398px;top:567px" width="16" height="16"><path d="M1 1.5 H13 L8.6 7 V13.5 H5.4 V7 Z" fill="#666"/></svg>
<div class="a" style="left:51px;top:588px;width:369px;height:144px;background:#fffee6"></div>
<div class="a" style="left:410px;top:588px;width:10px;height:128px;background:#e9e7cc"></div>
<div class="a" style="left:51px;top:589px;width:369px;height:21px;background:#1b7bc4"></div>
<div class="a" style="left:410px;top:589px;width:10px;height:21px;background:#2b7bbb"></div>
<div class="t" style="left:59px;top:589px;width:361px;overflow:hidden;color:#fff">getHandler:1182, DispatcherServlet <i>(org.springframework.web.servlet)</i></div>
<div class="t" style="left:59px;top:610px;width:361px;overflow:hidden;color:#7d7d7d">doDispatch:964, DispatcherServlet <i>(org.springframework.web.servlet)</i></div>
<div class="t" style="left:59px;top:631px;width:361px;overflow:hidden;color:#7d7d7d">doService:925, DispatcherServlet <i>(org.springframework.web.servlet)</i></div>
<div class="t" style="left:59px;top:652px;width:361px;overflow:hidden;color:#7d7d7d">processRequest:974, FrameworkServlet <i>(org.springframework.web.servlet)</i></div>
<div class="t" style="left:59px;top:673px;width:361px;overflow:hidden;color:#7d7d7d">doGet:866, FrameworkServlet <i>(org.springframework.web.servlet)</i></div>
<div class="t" style="left:59px;top:694px;width:361px;overflow:hidden;color:#7d7d7d">service:621, HttpServlet <i>(javax.servlet.http)</i></div>
<div class="t" style="left:59px;top:715px;width:361px;overflow:hidden;color:#7d7d7d">service:851, FrameworkServlet <i>(org.springframework.web.servlet)</i></div>
<div class="a" style="left:421px;top:560px;width:24px;height:172px;background:#f2f2f2"></div>
<div class="a" style="left:445px;top:560px;width:1px;height:172px;background:#c8c8c8"></div>
<div class="a" style="left:446px;top:560px;width:1116px;height:172px;background:#fff"></div>
<div class="a" style="left:446px;top:644px;width:1116px;height:21px;background:#1b7bc4"></div>
<svg class="a" style="left:425px;top:565px" width="16" height="16"><path d="M8 2 V14 M2 8 H14" stroke="#555" stroke-width="1.8"/></svg>
<svg class="a" style="left:425px;top:591px" width="16" height="16"><path d="M2 8 H14" stroke="#c4c4c4" stroke-width="1.8"/></svg>
<svg class="a" style="left:425px;top:617px" width="16" height="16"><path d="M2 11 L8 5 L14 11 Z" fill="#d0d0d0"/></svg>
<svg class="a" style="left:425px;top:643px" width="16" height="16"><path d="M2 5 L8 11 L14 5 Z" fill="#d0d0d0"/></svg>
<svg class="a" style="left:425px;top:668px" width="16" height="16"><rect x="4.5" y="4.5" width="10" height="10" fill="none" stroke="#555" stroke-width="1.6"/><path d="M1.5 12 V1.5 H12" fill="none" stroke="#555" stroke-width="1.5"/><path d="M7 8 H12 M7 11 H12" stroke="#555" stroke-width="1.2"/></svg>
<div class="a" style="left:423px;top:691px;width:21px;height:22px;background:#d4d4d4"></div>
<svg class="a" style="left:425px;top:695px" width="18" height="14"><circle cx="4.5" cy="7.5" r="3.3" fill="none" stroke="#555" stroke-width="1.5"/><circle cx="13" cy="7.5" r="3.3" fill="none" stroke="#555" stroke-width="1.5"/><path d="M1.2 7 Q1 4 4 4 H13.5 Q16.5 4 16.5 7" fill="none" stroke="#555" stroke-width="1.4"/></svg>
<svg class="a" style="left:449px;top:565px" width="12" height="12"><polyline points="2,1.5 6,5.5 2,9.5" fill="none" stroke="#555" stroke-width="1.6"/></svg>
<svg class="a" style="left:470px;top:564px" width="14" height="14"><rect x="1" y="1" width="11" height="2.4" fill="#f2b968"/><rect x="1" y="5" width="11" height="2.4" fill="#f2b968"/><rect x="1" y="9" width="11" height="2.4" fill="#f2b968"/></svg>
<div class="t" style="left:486px;top:560px;color:#7a0a0a">this <span style="color:#000">=</span> <span style="color:#808080">{DispatcherServlet@4008}</span></div>
<svg class="a" style="left:449px;top:586px" width="12" height="12"><polyline points="2,1.5 6,5.5 2,9.5" fill="none" stroke="#555" stroke-width="1.6"/></svg>
<svg class="a" style="left:468px;top:584px" width="16" height="16"><circle cx="7.5" cy="7.5" r="6.8" fill="#f5c47a"/><text x="4.2" y="11.3" font-size="10" font-family="Liberation Sans" fill="#555">p</text></svg>
<div class="t" style="left:486px;top:581px;color:#7a0a0a">request <span style="color:#000">=</span> <span style="color:#808080">{RequestFacade@4009}</span></div>
<svg class="a" style="left:449px;top:607px" width="12" height="12"><polyline points="2,1.5 6,5.5 2,9.5" fill="none" stroke="#555" stroke-width="1.6"/></svg>
<svg class="a" style="left:467px;top:607px" width="18" height="12"><circle cx="4.5" cy="6" r="3.3" fill="none" stroke="#8a9aa4" stroke-width="1.4"/><circle cx="13" cy="6" r="3.3" fill="none" stroke="#8a9aa4" stroke-width="1.4"/><path d="M1.2 5.5 Q1.2 2.6 4 2.6 H13.5 Q16.5 2.6 16.5 5.5" fill="none" stroke="#8a9aa4" stroke-width="1.3"/></svg>
<div class="t" style="left:486px;top:602px;color:#7a0a0a">logger <span style="color:#000">=</span> <span style="color:#808080">{LogFactory$JavaUtilLog@4010}</span></div>
<svg class="a" style="left:448px;top:629px" width="12" height="12"><polyline points="1.5,3 5.5,7 9.5,3" fill="none" stroke="#555" stroke-width="1.6"/></svg>
<svg class="a" style="left:467px;top:628px" width="18" height="12"><circle cx="4.5" cy="6" r="3.3" fill="none" stroke="#8a9aa4" stroke-width="1.4"/><circle cx="13" cy="6" r="3.3" fill="none" stroke="#8a9aa4" stroke-width="1.4"/><path d="M1.2 5.5 Q1.2 2.6 4 2.6 H13.5 Q16.5 2.6 16.5 5.5" fill="none" stroke="#8a9aa4" stroke-width="1.3"/></svg>
<div class="t" style="left:486px;top:623px;color:#7a0a0a">this.handlerMappings <span style="color:#000">=</span> <span style="color:#808080">{ArrayList@4011}</span> <span style="color:#000"> size = 1</span></div>
<svg class="a" style="left:470px;top:649px" width="12" height="12"><polyline points="2,1.5 6,5.5 2,9.5" fill="none" stroke="#1f4f80" stroke-width="1.6"/></svg>
<svg class="a" style="left:490px;top:648px" width="14" height="14"><rect x="1" y="1" width="11" height="2.4" fill="#c9b57a"/><rect x="1" y="5" width="11" height="2.4" fill="#c9b57a"/><rect x="1" y="9" width="11" height="2.4" fill="#c9b57a"/></svg>
<div class="t" style="left:506px;top:644px;color:#fff">0 = {RequestMappingHandlerMapping@4027}</div>
<div class="a" style="left:1473px;top:654px;width:60px;height:25px;background:#000;border-radius:4px;box-shadow:0 1px 3px rgba(0,0,0,.5)"></div>
<div class="t" style="left:1478px;top:656px;color:#fff;font-size:13px">EN</div>
<svg class="a" style="left:1500px;top:658px" width="14" height="16"><path d="M3 3 Q11 4 10 9 Q9 13 3 13 Q8 10 3 3" fill="none" stroke="#fff" stroke-width="1.3"/></svg>
<div class="t" style="left:1514px;top:656px;color:#ddd;font-size:13px">简</div>
</body></html>
